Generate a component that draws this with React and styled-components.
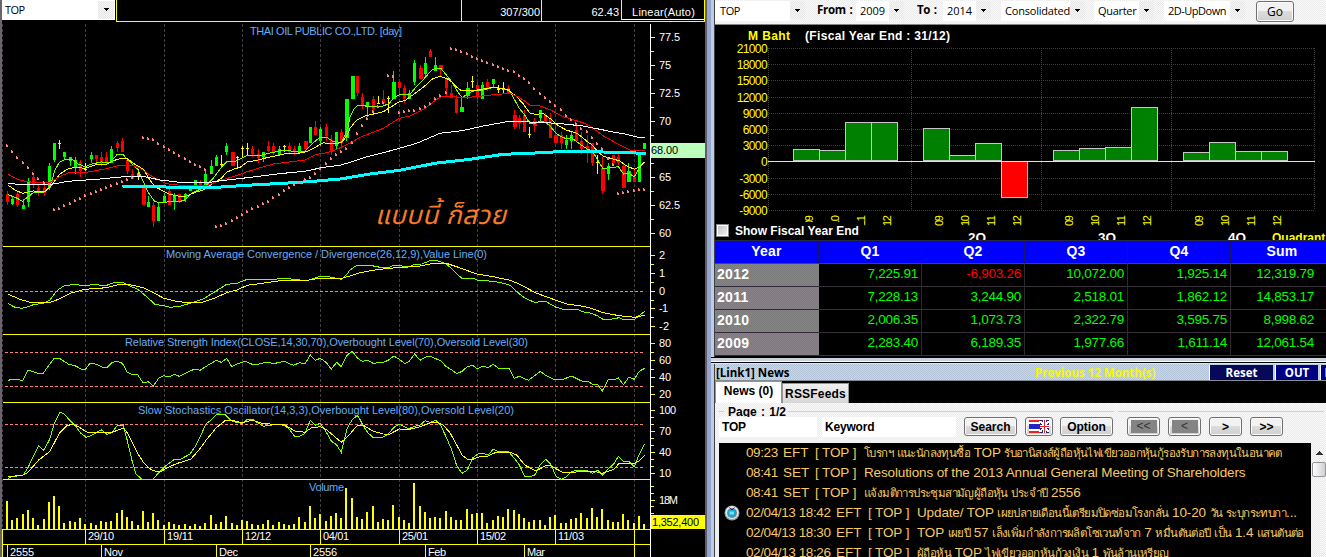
import React from "react";
import styled, { createGlobalStyle, css } from "styled-components";

const GlobalStyle = createGlobalStyle`
  * {
    box-sizing: border-box;
  }
  body {
    margin: 0;
    background: #000;
    overflow: hidden;
    font-family: "Liberation Sans", Arial, sans-serif;
  }
`;

/* ---------- data ---------- */

// kind, high, body top, body bottom, low (y in px)
const candles = [
  ["r", 191, 194, 202, 205], ["g", 197, 199, 204, 205], ["r", 192, 194, 205, 207], ["g", 199, 205, 209, 209],
  ["g", 178, 182, 202, 207], ["r", 173, 177, 185, 188], ["r", 185, 188, 193, 196], ["r", 185, 188, 193, 196],
  ["g", 163, 166, 188, 190], ["g", 143, 143, 160, 162], ["y", 140, 143, 143, 149], ["g", 152, 152, 157, 160],
  ["g", 157, 157, 161, 166], ["g", 157, 160, 167, 174], ["r", 160, 162, 171, 177], ["y", 163, 169, 169, 171],
  ["g", 152, 155, 159, 163], ["r", 155, 155, 159, 162], ["r", 152, 157, 162, 166], ["r", 152, 157, 162, 165],
  ["g", 146, 149, 163, 163], ["r", 141, 143, 148, 152], ["r", 138, 141, 152, 152], ["r", 160, 160, 171, 174],
  ["r", 169, 174, 179, 179], ["y", 169, 175, 175, 180], ["R", 185, 187, 205, 205], ["g", 196, 202, 207, 207],
  ["r", 202, 205, 221, 227], ["g", 202, 207, 221, 221], ["g", 193, 196, 202, 202], ["r", 185, 191, 205, 205],
  ["g", 193, 195, 202, 210], ["r", 194, 194, 202, 203], ["g", 193, 194, 199, 202], ["g", 186, 186, 191, 191],
  ["g", 180, 180, 185, 188], ["r", 180, 182, 186, 188], ["g", 171, 174, 186, 186], ["g", 160, 166, 174, 174],
  ["g", 155, 157, 166, 166], ["y", 155, 164, 164, 166], ["g", 143, 146, 152, 155], ["R", 152, 152, 166, 166],
  ["y", 156, 157, 157, 168], ["y", 146, 148, 148, 157], ["y", 143, 148, 148, 155], ["r", 146, 149, 154, 157],
  ["r", 149, 154, 158, 163], ["g", 152, 152, 157, 162], ["r", 141, 146, 151, 152], ["r", 143, 146, 152, 155],
  ["g", 146, 149, 155, 155], ["y", 145, 146, 146, 152], ["r", 143, 146, 152, 154], ["r", 146, 149, 152, 155],
  ["g", 143, 146, 152, 152], ["R", 141, 141, 149, 149], ["g", 127, 127, 143, 143], ["r", 121, 127, 135, 135],
  ["g", 127, 129, 141, 146], ["r", 124, 127, 136, 141], ["r", 135, 140, 152, 155], ["g", 132, 132, 146, 149],
  ["r", 129, 132, 143, 149], ["G", 99, 99, 138, 141], ["G", 76, 76, 99, 99], ["r", 76, 76, 93, 96],
  ["r", 93, 97, 105, 109], ["g", 102, 102, 107, 117], ["r", 96, 99, 109, 112], ["y", 96, 103, 103, 104],
  ["r", 90, 99, 103, 105], ["y", 96, 98, 98, 113], ["G", 71, 82, 99, 99], ["r", 82, 82, 88, 97],
  ["r", 85, 88, 99, 103], ["g", 90, 93, 99, 99], ["g", 60, 63, 82, 85], ["R", 65, 68, 79, 79],
  ["g", 57, 63, 74, 77], ["r", 49, 51, 57, 57], ["g", 57, 65, 71, 71], ["R", 65, 65, 70, 76],
  ["r", 77, 79, 88, 97], ["r", 85, 93, 98, 98], ["r", 95, 99, 113, 113], ["G", 97, 107, 112, 112],
  ["G", 82, 88, 96, 99], ["y", 76, 81, 81, 88], ["r", 82, 85, 97, 103], ["g", 82, 85, 99, 99],
  ["r", 79, 82, 88, 91], ["g", 79, 79, 84, 87], ["y", 85, 89, 89, 93], ["y", 82, 89, 89, 93],
  ["r", 85, 88, 93, 93], ["R", 110, 115, 127, 129], ["r", 115, 118, 123, 129], ["r", 110, 115, 132, 132],
  ["y", 127, 134, 134, 138], ["R", 118, 121, 126, 132], ["g", 110, 110, 118, 123], ["r", 113, 115, 123, 123],
  ["r", 113, 118, 138, 138], ["R", 123, 135, 143, 143], ["r", 132, 135, 143, 149], ["g", 135, 140, 145, 149],
  ["g", 132, 135, 141, 149], ["r", 124, 130, 141, 141], ["r", 132, 141, 149, 154], ["r", 135, 146, 152, 163],
  ["r", 143, 143, 163, 166], ["y", 155, 162, 162, 174], ["R", 157, 168, 191, 194], ["g", 163, 166, 174, 180],
  ["r", 155, 155, 163, 166], ["r", 154, 157, 163, 165], ["R", 163, 166, 188, 188], ["G", 163, 171, 182, 182],
  ["r", 168, 177, 182, 182], ["g", 154, 154, 182, 182], ["g", 143, 143, 149, 149],
];

const volumes = [
  28, 9, 11, 15, 19, 11, 4, 10, 27, 33, 23, 6, 8, 7, 11, 5, 6, 4, 8, 7, 8, 16, 19, 12, 8, 4, 18, 7, 16, 9, 4, 7, 5, 4,
  5, 3, 5, 3, 6, 14, 5, 7, 13, 6, 4, 9, 8, 5, 4, 5, 9, 4, 7, 5, 4, 5, 12, 7, 23, 11, 15, 8, 13, 16, 11, 41, 31, 12,
  10, 17, 23, 7, 10, 9, 24, 12, 9, 6, 46, 23, 17, 11, 12, 11, 18, 12, 9, 9, 20, 15, 16, 16, 6, 9, 13, 12, 20, 19, 15,
  11, 7, 9, 9, 4, 12, 14, 6, 6, 10, 11, 16, 11, 21, 12, 20, 9, 7, 7, 15, 9, 6, 13, 5,
];

// parabolic SAR runs: first candle index and one y per candle
const sarRuns = [
  [0, [145, 151, 157, 162, 167, 173, 178, 182, 184]],
  [9, [209, 208, 205, 203, 200, 198, 195, 193, 191, 189, 187, 185, 183, 181, 179, 177, 174]],
  [26, [137, 138, 139, 143, 146, 149, 152, 155, 158, 161, 164, 166, 169, 172]],
  [40, [226, 225, 223, 220, 217, 214, 211, 208, 206, 203, 201, 197, 194, 190, 187, 184, 182, 179, 177, 173, 168, 163, 158, 154, 151, 148, 142, 133]],
  [68, [125, 118, 111, 106, 102]],
  [73, [75, 76]],
  [75, [112, 111, 110, 110, 108, 106, 103, 98, 95, 92]],
  [85, [48, 49, 51, 53, 56, 58, 60, 62, 64, 66, 68, 70, 71, 75, 78, 82, 88, 93, 97, 101, 105, 109, 115, 119, 123, 128, 131, 137, 143, 148, 158, 164]],
  [117, [193, 192, 191, 190, 189, 189]],
];

// Line samples are kept on a grid three times finer than the screen.
// `right` restarts at x = 350px, `top` is the y of the samples' origin.
const traces = [
  {
    color: "#7fff00", top: 0,
    left: "25,584 52,595 67,604 84,591 100,578 130,578 150,560 165,510 178,487 193,479 215,477 235,492 255,500 275,492 304,486 330,487 351,464 370,464 383,480 413,508 430,545 445,578 465,605 485,608 508,605 538,605 554,600 575,580 600,568 620,555 640,535 664,502 680,485 705,485 725,475 742,466 775,468 805,460 853,450 900,457 915,453 935,432 960,412 980,412 1000,425 1025,427 1042,390",
    right: "0,352 10,330 22,318 37,315 53,320 100,318 118,310 132,293 148,284 178,285 195,265 210,250 226,232 245,210 257,205 272,205 289,225 305,245 320,270 336,293 355,280 378,270 400,270 430,262 461,268 477,268 493,298 508,325 524,345 540,371 556,370 571,362 590,370 602,380 618,400 633,410 649,416 664,413 680,425 697,437 712,447 727,453 743,480 759,506 775,503 791,502 805,500 821,522 837,520 853,530 868,505 884,485",
  },
  {
    color: "#ffff00", top: 0,
    left: "25,556 45,570 67,580 84,576 100,573 135,574 150,562 178,524 200,508 225,502 255,505 288,494 320,492 351,478 380,474 400,490 430,508 450,540 465,560 490,573 508,583 538,589 560,588 585,577 610,570 640,550 664,535 680,517 700,508 720,502 742,486 775,480 800,473 853,462 900,459 920,455 946,442 970,428 990,432 1025,428 1042,405",
    right: "0,385 20,360 45,348 100,335 148,305 165,302 195,280 220,262 245,238 270,229 289,235 305,245 320,262 336,273 380,270 430,262 470,268 500,290 520,312 540,340 556,343 580,341 602,357 625,377 649,390 680,400 697,412 712,425 727,435 743,455 759,468 791,478 808,482 825,495 853,508 870,500 884,485",
  },
  {
    color: "#ff0000", top: 0,
    left: "25,523 50,537 75,544 115,549 150,548 178,530 205,519 265,516 320,506 351,498 385,495 413,500 440,518 465,535 500,551 550,557 620,557 664,540 700,530 742,515 775,505 820,492 868,486 915,480 946,464 980,458 1010,448 1040,434",
    right: "0,430 30,412 100,385 148,355 180,348 226,325 257,300 275,290 300,289 336,293 380,290 430,284 480,280 508,292 540,315 571,318 602,330 640,350 680,362 712,373 743,395 759,407 800,430 840,450 884,452",
  },
  {
    color: "#ffffff", top: 0,
    left: "25,550 70,555 155,553 205,544 300,537 385,529 435,530 480,540 550,548 620,548 680,540 742,533 850,520 915,514 970,502 1020,496",
    right: "0,487 50,470 100,458 148,445 200,430 270,400 336,392 400,378 477,364 540,366 620,370 700,378 750,388 800,398 830,403 860,411 884,411",
  },
  {
    color: "#00ffff", width: 3, top: 0,
    left: "366,558 460,560 580,563 650,562 740,556 850,550 940,544 1030,536",
    right: "0,532 60,522 148,511 260,489 360,478 460,463 540,460 610,456 680,454 760,456 887,460",
  },
  {
    color: "#7fff00", top: 240,
    left: "25,191 45,202 67,205 84,200 100,194 130,190 150,180 163,162 178,147 193,137 225,133 255,138 275,134 320,136 345,127 370,128 390,138 413,148 440,170 465,193 490,197 510,202 540,199 575,188 610,177 640,158 680,133 711,130 742,118 800,120 853,115 920,122 960,109 980,109 1025,118 1042,101",
    right: "0,90 20,76 60,76 90,82 118,82 132,76 178,80 195,73 215,72 240,62 262,62 289,72 305,86 320,102 336,115 370,115 383,121 430,124 461,130 480,136 500,155 524,174 556,188 571,184 590,186 618,202 640,208 680,208 705,217 725,220 743,228 759,238 780,238 808,233 821,239 853,239 868,226 884,214",
  },
  {
    color: "#ffff00", top: 240,
    left: "25,163 60,178 90,187 150,187 178,177 210,160 255,148 320,143 360,133 390,134 430,143 460,158 490,174 520,182 560,188 605,187 640,176 680,158 711,150 742,136 800,128 850,121 920,121 960,115 1025,115",
    right: "0,108 30,98 80,89 148,82 200,80 240,72 289,70 320,80 380,102 430,110 480,121 510,133 556,158 618,181 650,192 700,199 730,207 759,218 808,227 853,232 884,226",
  },
  {
    color: "#7fff00", top: 240,
    left: "25,421 38,418 68,421 84,391 100,395 118,402 130,400 147,375 163,355 178,355 205,372 225,377 245,388 256,388 271,369 290,373 310,383 320,383 335,368 350,364 367,370 382,397 397,404 413,404 429,428 445,425 460,438 476,415 492,407 508,411 523,403 538,409 570,393 585,387 600,391 625,375 649,361 664,367 680,355 695,380 711,372 735,364 757,373 775,373 800,366 820,371 853,364 880,376 899,368 915,371 931,345 946,361 961,355 978,367 994,387 1010,367 1024,380 1040,347",
    right: "6,333 22,354 37,364 53,361 69,370 100,367 115,361 132,348 148,358 165,371 178,364 194,342 210,361 226,352 240,348 257,356 272,362 289,380 305,390 320,401 336,394 352,380 368,376 383,387 398,378 414,383 430,373 446,385 477,385 493,415 508,409 535,421 556,406 571,394 587,406 612,418 640,418 664,408 697,424 713,424 727,432 743,434 757,453 775,418 797,418 805,413 820,434 837,411 853,418 868,394 884,385",
  },
  {
    color: "#7fff00", top: 240,
    left: "25,716 35,709 68,707 84,683 100,648 116,618 131,631 149,598 163,550 180,516 193,522 210,542 226,558 241,578 258,592 271,588 288,578 304,569 320,583 335,578 351,558 370,555 382,602 397,665 408,702 425,717 460,717 476,698 492,682 523,658 538,660 570,642 585,620 601,590 617,553 633,540 649,524 675,523 695,543 711,548 727,550 742,538 757,538 790,559 830,553 853,556 868,568 884,589 899,589 915,580 931,541 946,556 961,550 978,575 994,603 1010,615 1024,637 1040,570",
    right: "0,550 10,535 24,527 37,552 53,578 69,592 100,591 115,582 132,562 148,553 175,566 194,559 210,555 226,542 240,547 257,541 272,556 289,592 305,630 320,677 336,700 352,690 368,654 383,642 400,640 414,645 430,628 446,635 477,636 493,655 508,675 524,709 540,710 556,704 571,674 587,658 602,672 618,709 633,718 649,711 664,695 680,691 713,693 727,700 743,690 757,706 775,686 791,672 805,649 820,664 837,664 853,680 868,642 884,611",
  },
  {
    color: "#ffff00", top: 240,
    left: "25,710 68,706 84,697 116,660 149,635 178,580 200,557 217,553 235,560 262,577 335,577 370,565 382,578 413,640 429,665 445,683 460,692 480,696 508,680 538,668 572,658 601,625 617,602 649,563 675,542 695,541 727,548 757,541 790,551 853,554 884,573 915,577 935,563 961,560 978,568 1024,607 1042,590",
    right: "0,582 20,558 40,556 70,574 100,582 118,583 148,567 178,568 210,560 240,549 265,548 280,556 300,578 320,615 336,645 352,657 368,658 390,650 414,648 440,636 480,637 500,645 524,675 556,692 571,686 587,677 602,677 618,686 640,698 664,698 700,693 740,696 757,700 791,688 808,670 850,672 868,662 884,646",
  },
];

// x, baseline, width, text
const chartTitles = [
  [250, 35, 152, "THAI OIL PUBLIC CO.,LTD. [day]"],
  [166, 258, 321, "Moving Average Convergence / Divergence(26,12,9),Value Line(0)"],
  [125, 346, 403, "Relative Strength Index(CLOSE,14,30,70),Overbought Level(70),Oversold Level(30)"],
  [138, 414, 376, "Slow Stochastics Oscillator(14,3,3),Overbought Level(80),Oversold Level(20)"],
  [309, 491, 35, "Volume"],
];

// y, width, text
const axisLabels = [
  [37, 21, "77.5"], [65, 12, "75"], [93, 21, "72.5"], [121, 12, "70"], [177, 12, "65"], [205, 21, "62.5"], [233, 12, "60"],
  [255, 6, "2"], [273, 5, "1"], [291, 6, "0"], [308, 9, "-1"], [326, 10, "-2"],
  [343, 12, "80"], [360, 12, "60"], [377, 12, "40"], [394, 12, "20"],
  [410, 17, "100"], [431, 12, "70"], [452, 12, "40"], [473, 12, "10"],
  [500, 19, "18M"],
];
const minorTicks = [
  51, 79, 107, 135, 163, 191, 219, 264, 282, 300, 317, 352, 369, 386, 417, 424, 438, 445, 459, 466, 486, 493, 506, 513,
];

const gridX = [85, 164, 242, 320, 399, 477, 555, 634];
const days = [[85, "29/10"], [164, "19/11"], [242, "12/12"], [320, "04/01"], [399, "25/01"], [477, "15/02"], [555, "11/03"]];
const months = [[7, "2555", 24], [101, "Nov", 19], [216, "Dec", 19], [310, "2556", 24], [425, "Feb", 18], [524, "Mar", 18]];

const quarters = [
  [793, [149, 150, 122, 122]],
  [923, [128, 155, 143, 198]],
  [1053, [150, 148, 147, 107]],
  [1183, [152, 142, 151, 151]],
];

const earnings = [
  ["2012", "7,225.91", "-6,903.26", "10,072.00", "1,925.14", "12,319.79"],
  ["2011", "7,228.13", "3,244.90", "2,518.01", "1,862.12", "14,853.17"],
  ["2010", "2,006.35", "1,073.73", "2,322.79", "3,595.75", "8,998.62"],
  ["2009", "2,283.40", "6,189.35", "1,977.66", "1,611.14", "12,061.54"],
];

const news = [
  { time: "09:23", source: "EFT", title: "โบรกฯ แนะนักลงทุนซื้อ TOP รับอานิสงส์ผู้ถือหุ้นไฟเขียวออกหุ้นกู้รองรับการลงทุนในอนาคต" },
  { time: "08:41", source: "SET", title: "Resolutions of the 2013 Annual General Meeting of Shareholders" },
  { time: "08:41", source: "SET", title: "แจ้งมติการประชุมสามัญผู้ถือหุ้น ประจำปี 2556" },
  { time: "02/04/13 18:42", source: "EFT", title: "Update/ TOP เผยปลายเดือนนี้เตรียมปิดซ่อมโรงกลั่น 10-20 วัน ระบุกระทบกา...", tv: true },
  { time: "02/04/13 18:30", source: "EFT", title: "TOP เผยปี 57 เล็งเพิ่มกำลังการผลิตโซเวนท์จาก 7 หมื่นตันต่อปี เป็น 1.4 แสนตันต่อ" },
  { time: "02/04/13 18:26", source: "EFT", title: "ผู้ถือหุ้น TOP ไฟเขียวออกหุ้นกู้วงเงิน 1 พันล้านเหรียญ" },
];

/* ---------- shared ---------- */

const checker = (a, b) => css`
  background: repeating-conic-gradient(${a} 0 25%, ${b} 0 50%) 0 0 / 2px 2px;
`;

const Screen = styled.main`
  display: flex;
  width: 1326px;
  height: 557px;
  overflow: hidden;
  background: #000;
`;
const ArrowCont = styled.span`
  width: ${(props) => props.$w || 15}px;
  height: ${(props) => props.$h || 18}px;
  display: flex;
  align-items: center;
  justify-content: center;
  flex: none;
  ${checker("#e4e4e4", "#f8f8f8")}
`;
const Arrow = ({ w, h }) => (
  <ArrowCont $w={w} $h={h}>
    <svg width="5" height="3" shapeRendering="crispEdges">
      <path d="M0 0H5V1H4V2H3V3H2V2H1V1H0Z" fill="#000" />
    </svg>
  </ArrowCont>
);

/* ---------- left side: price chart ---------- */

const ChartPanel = styled.section`
  width: 705px;
  flex: none;
  display: flex;
  flex-direction: column;
  border-left: 2px solid #6b636b;
`;
const ChartBar = styled.div`
  display: flex;
  height: 22px;
  align-items: flex-start;
`;
const SymbolBox = styled.div`
  width: 113px;
  height: 20px;
  display: flex;
  align-items: center;
  justify-content: space-between;
  padding: 0 1px 1px 3px;
  background: #fff;
  color: #000;
  font-family: "Open Sans", sans-serif;
  font-size: 11px;
  letter-spacing: -0.6px;
`;
const StatusCells = styled.div`
  flex: 1;
  margin-left: 1px;
  height: 22px;
  display: flex;
  justify-content: flex-end;
  border: solid #ffff00;
  border-width: 0 1px 1px 1px;
`;
const StatusCell = styled.div`
  width: ${(props) => props.$w}px;
  border-left: 1px solid #ffff00;
  padding-top: 5px;
  padding-right: ${(props) => props.$pad}px;
  color: #fff;
  font-size: 11px;
  line-height: 14px;
  letter-spacing: ${(props) => props.$ls || 0}px;
  text-align: right;
  ${(props) =>
    props.$boxed &&
    css`
      height: 20px;
      border-bottom: 1px solid #fff;
    `}
`;
const ChartSvg = styled.svg`
  display: block;
  flex: none;
  font-family: "Liberation Sans", Arial, sans-serif;
  font-size: 11px;
`;

const barX = (i) => Math.round(6 + i * 5.222);

const toPoints = ({ left, right, top }) =>
  [[left, 0], [right, 350]]
    .flatMap(([samples, x0]) =>
      samples.split(" ").map((pair) => {
        const [x, y] = pair.split(",").map(Number);
        return `${(x0 + x / 3).toFixed(1)},${(top + y / 3).toFixed(1)}`;
      })
    )
    .join(" ");

const candleColors = { r: "#ff0000", g: "#00ff00", y: "#ffff00" };

const Candle = ({ i, row }) => {
  const [kind, high, top, bottom, low] = row;
  const x = barX(i);
  const color = candleColors[kind.toLowerCase()];
  const wide = kind === "G" || kind === "R";
  return (
    <g fill={color}>
      <rect x={x + 1} y={high} width="1" height={low - high} />
      <rect x={wide ? x - 0.5 : x} y={top} width={wide ? 4 : 3} height={Math.max(1, bottom - top)} />
    </g>
  );
};

const PriceChart = () => (
  <ChartSvg width="703" height="535" viewBox="2 22 703 535" shapeRendering="crispEdges">
    <g stroke="#463e46" strokeDasharray="3 2">
      {gridX.map((x) => (
        <line key={x} x1={x + 0.5} x2={x + 0.5} y1="24" y2="529" />
      ))}
      <line x1="2.5" x2="2.5" y1="24" y2="529" />
    </g>
    <g fill="#ffff00">
      {[246, 334, 402, 479, 529, 544].map((y) => (
        <rect key={y} x="3" y={y} width="647" height="1" />
      ))}
      <rect x="2" y="529" width="1" height="28" />
      {days.map(([x]) => (
        <rect key={x} x={x} y="529" width="1" height="15" />
      ))}
      {months.map(([x]) => (
        <rect key={x} x={x} y="544" width="1" height="13" />
      ))}
      <rect x="634" y="529" width="1" height="28" />
    </g>
    <g stroke="#ff8080" strokeDasharray="3 2">
      {[291, 352, 386, 424, 467].map((y) => (
        <line key={y} x1="5" x2="645" y1={y + 0.5} y2={y + 0.5} />
      ))}
    </g>
    <g fill="#63adf7">
      {chartTitles.map(([x, y, w, text]) => (
        <text key={text} x={x} y={y} textLength={w}>{text}</text>
      ))}
    </g>
    {candles.map((row, i) => (
      <Candle key={i} i={i} row={row} />
    ))}
    {traces.map((trace, i) => (
      <polyline key={i} points={toPoints(trace)} fill="none" stroke={trace.color} strokeWidth={trace.width || 1} />
    ))}
    <g fill="#ff8080">
      {sarRuns.map(([start, ys]) =>
        ys.map((y, k) => (
          <path key={start + k} d={`M${barX(start + k)} ${y - 1}h1v1h1v2h-2z`} />
        ))
      )}
    </g>
    <g fill="#ffff00">
      {volumes.map((h, i) => (
        <rect key={i} x={barX(i)} y={529 - h} width="2" height={h} />
      ))}
    </g>
    <text x="375" y="224" textLength="131" fill="#f77b29" fontSize="26" fontStyle="italic" fontFamily='"Noto Sans Thai", "Liberation Sans", sans-serif'>
      แบบนี้ ก็สวย
    </text>
    <rect x="650" y="24" width="1" height="533" fill="#fff" />
    <g fill="#ffff00">
      {axisLabels.map(([y]) => (
        <rect key={y} x="651" y={y} width="4" height="1" />
      ))}
      {minorTicks.map((y) => (
        <rect key={y} x="651" y={y} width="3" height="1" />
      ))}
    </g>
    <g fill="#fff">
      {axisLabels.map(([y, w, text]) => (
        <text key={y} x="659" y={y + 4} textLength={w}>{text}</text>
      ))}
      {days.map(([x, text]) => (
        <text key={x} x={x + 3} y="540" textLength="26">{text}</text>
      ))}
      {months.map(([x, text, w]) => (
        <text key={x} x={x + 3} y="556" textLength={w}>{text}</text>
      ))}
    </g>
    <rect x="651" y="143" width="54" height="15" fill="#bdffbd" />
    <text x="651" y="154" textLength="27" fill="#000">68.00</text>
    <rect x="651" y="515" width="54" height="14" fill="#ffff00" />
    <text x="652" y="526" textLength="47" fill="#000">1,352,400</text>
  </ChartSvg>
);

/* ---------- splitter ---------- */

const Splitter = styled.div`
  width: 10px;
  flex: none;
  border-left: 2px solid #635a6b;
  border-right: 1px solid #42424a;
  background: linear-gradient(to right, #94a5ce 0 4px, #bdcee0 4px 100%);
`;

/* ---------- right side: earnings ---------- */

const RightPanel = styled.section`
  width: 611px;
  flex: none;
  display: flex;
  flex-direction: column;
`;
const Toolbar = styled.div`
  height: 25px;
  flex: none;
  display: flex;
  align-items: flex-start;
  padding-top: 1px;
  border-bottom: 1px solid #848484;
  ${checker("#ececec", "#fafafa")}
`;
const Field = styled.div`
  width: ${(props) => props.$w}px;
  height: 20px;
  margin-left: ${(props) => props.$ml || 0}px;
  padding-left: ${(props) => props.$pl}px;
  background: #fff;
  color: #000;
  font-family: "Open Sans", sans-serif;
  font-size: 11px;
  line-height: 20px;
  letter-spacing: ${(props) => props.$ls || 0}px;
  white-space: nowrap;
`;
const FieldLabel = styled.div`
  width: ${(props) => props.$w}px;
  margin-left: ${(props) => props.$ml}px;
  color: #000;
  font-family: "Open Sans", sans-serif;
  font-size: 11.5px;
  font-weight: 700;
  line-height: 18px;
  letter-spacing: -0.3px;
  word-spacing: 1px;
  white-space: nowrap;
`;
const XpButton = styled.button`
  width: ${(props) => props.$w}px;
  height: ${(props) => props.$h || 19}px;
  margin-left: ${(props) => props.$ml || 0}px;
  flex: none;
  padding: 0;
  display: flex;
  align-items: center;
  justify-content: center;
  border: 1px solid #707070;
  border-radius: 3px;
  box-shadow: inset 0 0 0 1px #fafafa;
  background: linear-gradient(#f2f2f2 0 48%, #dcdcdc 50%, #cfcfcf);
  color: #000;
  font-family: ${(props) => props.$font || '"Liberation Sans", Arial, sans-serif'};
  font-size: 12px;
  font-weight: ${(props) => (props.$plain ? 400 : 700)};
`;
const BarArea = styled.div`
  position: relative;
  height: 215px;
  flex: none;
`;
const BarSvg = styled.svg`
  display: block;
  font-family: "Liberation Sans", Arial, sans-serif;
`;
const FiscalToggle = styled.label`
  position: absolute;
  left: 0;
  top: 197px;
  width: 149px;
  height: 17px;
  display: flex;
  align-items: center;
  background: #000;
  color: #fff;
  font-size: 12px;
  font-weight: 700;
  white-space: nowrap;
`;
const CheckBox = styled.span`
  width: 13px;
  height: 13px;
  margin: 0 6px 0 1px;
  border: 1px solid #848484;
  box-shadow: inset 0 0 0 1px #fff;
  background: linear-gradient(135deg, #bdbdc6, #f4f4f4);
`;

const EarningsChart = () => (
  <BarArea>
    <BarSvg width="611" height="215" viewBox="715 25 611 215" shapeRendering="crispEdges">
      <text x="748" y="40" textLength="42" fill="#ffff00" fontSize="12" fontWeight="700">M Baht</text>
      <text x="805" y="40" textLength="145" fill="#fff" fontSize="12" fontWeight="700">(Fiscal Year End : 31/12)</text>
      <g stroke="#3e3e3e" strokeDasharray="1 1">
        {[48, 64, 80, 97, 113, 129, 145, 178, 194, 210].map((y) => (
          <line key={y} x1="769" x2="1314" y1={y + 0.5} y2={y + 0.5} />
        ))}
        {[768, 911, 1041, 1171, 1314].map((x) => (
          <line key={x} x1={x + 0.5} x2={x + 0.5} y1="48" y2="210" />
        ))}
      </g>
      <g fill="#ffff00" fontSize="12" textAnchor="end">
        {[21000, 18000, 15000, 12000, 9000, 6000, 3000, 0, -3000, -6000, -9000].map((v, i) => (
          <text key={v} x="767" y={53 + Math.round(i * 16.2)} letterSpacing="-0.6">{v}</text>
        ))}
      </g>
      {quarters.map(([x0, ys]) =>
        ys.map((y, i) => (
          <rect
            key={x0 + i}
            x={x0 + i * 26 + 0.5}
            y={y > 161 ? 161.5 : y + 0.5}
            width="26"
            height={y > 161 ? y - 162 : 160 - y}
            fill={y > 161 ? "#ff0000" : "#008000"}
            stroke="#c6c6c6"
          />
        ))
      )}
      <rect x="768" y="161" width="547" height="1" fill="#ffff00" />
      <g fill="#ffff00" fontSize="11">
        {quarters.map(([x0]) =>
          ["09", "10", "11", "12"].map((t, i) => (
            <text key={x0 + t} textLength="11" transform={`translate(${x0 + 20 + i * 26} 226) rotate(-90)`}>{t}</text>
          ))
        )}
      </g>
      <g fontSize="13.5" fontWeight="700" fill="#fff">
        <text x="968" y="242">2Q</text>
        <text x="1098" y="242">3Q</text>
        <text x="1228" y="242">4Q</text>
        <text x="1272" y="242" fill="#ffff00" fontSize="12">Quadrant</text>
      </g>
    </BarSvg>
    <FiscalToggle>
      <CheckBox />
      Show Fiscal Year End
    </FiscalToggle>
  </BarArea>
);

const Grid = styled.div`
  display: grid;
  grid-template-columns: 104px repeat(5, 103px);
  grid-template-rows: 24px repeat(4, 23px);
  width: 611px;
  height: 117px;
  flex: none;
  overflow: hidden;
`;
const HeadCell = styled.div`
  padding-top: 1px;
  border-top: 1px solid #2a2a3a;
  border-right: 1px solid #181860;
  border-bottom: 1px solid #4a424a;
  background: #0000ff;
  color: #fff;
  font-size: 14px;
  font-weight: 700;
  line-height: 19px;
  letter-spacing: 0.2px;
  text-align: center;
`;
const YearCell = styled.div`
  padding-left: 2px;
  border-bottom: 1px solid #31293a;
  color: #fff;
  font-size: 14px;
  font-weight: 700;
  line-height: 21px;
  letter-spacing: 0.3px;
  ${checker("#7a7a7a", "#8a848a")}
`;
const ValueCell = styled.div`
  padding-right: ${(props) => (props.$last ? 19 : 3)}px;
  border-right: 1px solid #312931;
  border-bottom: 1px solid #393139;
  color: ${(props) => (props.$negative ? "#ff0000" : "#00ff00")};
  font-size: 13.5px;
  line-height: 20px;
  letter-spacing: -0.25px;
  text-align: right;
`;

/* ---------- right side: news ---------- */

const Gap = styled.div`
  height: 7px;
  flex: none;
  margin-left: -4px;
  background: linear-gradient(#000 0 1px, #c6d2de 1px 4px, #fff 4px 5px, #000 5px 6px, #dce6f0 6px);
`;
const TitleBar = styled.div`
  height: 17px;
  flex: none;
  display: flex;
  align-items: center;
  overflow: hidden;
  border-bottom: 1px solid #848c94;
  ${checker("#b4c4d8", "#ccd6de")}
  color: #000;
  font-family: "Open Sans", sans-serif;
  font-size: 11.5px;
  font-weight: 700;
  white-space: nowrap;
`;
const WindowTitle = styled.span`
  width: 320px;
  flex: none;
  padding-left: 1px;
`;
const Period = styled.span`
  width: 174px;
  flex: none;
  color: #f7f700;
`;
const NavyButton = styled.span`
  width: ${(props) => props.$w}px;
  height: 15px;
  flex: none;
  margin-right: 2px;
  border-left: 1px solid #fff;
  background: ${(props) => props.$bg || "#000084"};
  color: #fff;
  line-height: 15px;
  text-align: center;
`;
const Tabs = styled.div`
  height: 22px;
  flex: none;
  display: flex;
  align-items: flex-end;
  background: #000;
`;
const Tab = styled.div`
  width: ${(props) => props.$w}px;
  height: ${(props) => (props.$active ? 22 : 20)}px;
  border: 1px solid #949494;
  border-bottom: 0;
  background: ${(props) => (props.$active ? "#fff" : "linear-gradient(#f0f0f0, #d6d6d6)")};
  color: #000;
  font-size: 12px;
  font-weight: 700;
  line-height: ${(props) => (props.$active ? 19 : 20)}px;
  letter-spacing: ${(props) => props.$ls || 0}px;
  text-align: center;
`;
const SearchArea = styled.div`
  height: 40px;
  flex: none;
  padding: 1px 0 0 4px;
  ${checker("#ebebeb", "#f9f9f9")}
`;
const PageRow = styled.div`
  display: flex;
  height: 13px;
  align-items: flex-start;
  overflow: hidden;
`;
const PageText = styled.span`
  flex: none;
  color: #000;
  font-size: 12px;
  font-weight: 700;
  line-height: 16px;
  word-spacing: 1px;
`;
const Rule = styled.i`
  width: ${(props) => props.$w}px;
  flex: none;
  margin: 7px ${(props) => props.$mr || 0}px 0 ${(props) => props.$ml || 0}px;
  border-top: 1px solid #c6d2e4;
`;
const SearchRow = styled.div`
  display: flex;
  align-items: flex-start;
  height: 20px;
`;
const Input = styled.div`
  width: ${(props) => props.$w}px;
  height: 20px;
  margin-right: ${(props) => props.$mr}px;
  padding-left: 3px;
  background: #fff;
  color: #000;
  font-size: 12px;
  font-weight: 700;
  line-height: 20px;
  letter-spacing: -0.2px;
`;
const Dimmed = styled.span`
  width: 26px;
  height: 13px;
  background: #848484;
  color: #333;
  line-height: 13px;
`;
const NewsBody = styled.div`
  flex: 1;
  min-height: 0;
  display: flex;
  padding-left: 4px;
  background: #f0f0f0;
`;
const NewsList = styled.div`
  width: 592px;
  flex: none;
  overflow: hidden;
  background: #000;
`;
const NewsRow = styled.div`
  height: 20px;
  display: flex;
  align-items: center;
  color: #f7ca63;
  font-size: 13.5px;
  line-height: 20px;
  white-space: nowrap;
`;
const Marker = styled.span`
  width: 27px;
  height: 16px;
  padding-left: 5px;
  flex: none;
`;
const Time = styled.span`
  width: ${(props) => (props.$long ? 90 : 37)}px;
  flex: none;
  letter-spacing: -0.4px;
`;
const Source = styled.span`
  width: 32px;
  flex: none;
`;
const Ticker = styled.span`
  width: 49px;
  flex: none;
  letter-spacing: -0.1px;
`;
const Headline = styled.span`
  letter-spacing: -0.13px;
`;
const Thai = styled.span`
  font-size: 11.5px;
  letter-spacing: -0.6px;
`;
const Scroll = styled.div`
  flex: 1;
  display: flex;
  flex-direction: column;
  padding: 1px 0 0 1px;
  ${checker("#e9e9e9", "#fafafa")}
`;
const ScrollUp = styled.div`
  height: 18px;
  display: flex;
  align-items: center;
  justify-content: center;
`;
const Thumb = styled.div`
  height: 15px;
  border: 1px solid #949494;
  border-radius: 2px;
  background: linear-gradient(to right, #fff, #cfcfd6);
`;

const Flag = () => (
  <svg width="20" height="13" shapeRendering="crispEdges">
    <rect width="11" height="13" fill="#fff" />
    <rect width="11" height="2" fill="#f02020" />
    <rect y="4" width="11" height="5" fill="#2121c6" />
    <rect y="11" width="11" height="2" fill="#f02020" />
    <rect x="11" width="9" height="13" fill="#21296b" />
    <path d="M11 1L20 12M20 1L11 12" stroke="#fff" strokeWidth="2" />
    <path d="M11 6.5H20M15.5 0V13" stroke="#fff" strokeWidth="3" />
    <path d="M11 6.5H20M15.5 0V13" stroke="#e02030" strokeWidth="1" />
  </svg>
);

const TvIcon = () => (
  <svg width="16" height="16" viewBox="0 0 16 16">
    <circle cx="8" cy="8" r="7.5" fill="#a0a0a0" />
    <circle cx="8" cy="7.5" r="6.5" fill="#e7e7ef" />
    <circle cx="8" cy="8" r="5" fill="#73848c" />
    <path d="M5.5 2.5L8 5L10.5 2.5" stroke="#333" fill="none" />
    <rect x="4" y="5" width="8" height="6.5" rx="1" fill="#18a5d6" />
    <rect x="5.5" y="6.5" width="4.5" height="3" fill="#6be7ff" />
  </svg>
);

// Thai runs are set smaller than the Latin text around them
const splitThai = (title) =>
  title.split(/([\u0E00-\u0E7F]+)/).map((part, i) => (i % 2 ? <Thai key={i}>{part}</Thai> : part));

const NewsPanel = () => (
  <>
    <TitleBar>
      <WindowTitle>[Link1] News</WindowTitle>
      <Period>Previous 12 Month(s)</Period>
      <NavyButton $w={64} $bg="#08085a">Reset</NavyButton>
      <NavyButton $w={43}>OUT</NavyButton>
      <NavyButton $w={12}>I</NavyButton>
    </TitleBar>
    <Tabs>
      <Tab $w={67} $active>News (0)</Tab>
      <Tab $w={67} $ls={0.2}>RSSFeeds</Tab>
    </Tabs>
    <SearchArea>
      <PageRow>
        <Rule $w={5} $mr={4} />
        <PageText>Page : 1/2</PageText>
        <Rule $w={326} $ml={2} $mr={4} />
        <Rule $w={206} />
      </PageRow>
      <SearchRow>
        <Input $w={98} $mr={5}>TOP</Input>
        <Input $w={134} $mr={8}>Keyword</Input>
        <XpButton $w={53}>Search</XpButton>
        <XpButton $w={28} $ml={8}><Flag /></XpButton>
        <XpButton $w={53} $ml={7}>Option</XpButton>
        <XpButton $w={33} $ml={14} $plain><Dimmed>&lt;&lt;</Dimmed></XpButton>
        <XpButton $w={33} $ml={8} $plain><Dimmed>&lt;</Dimmed></XpButton>
        <XpButton $w={33} $ml={8}>&gt;</XpButton>
        <XpButton $w={33} $ml={8}>&gt;&gt;</XpButton>
      </SearchRow>
    </SearchArea>
    <NewsBody>
      <NewsList>
        {news.map((item) => (
          <NewsRow key={item.title}>
            <Marker>{item.tv && <TvIcon />}</Marker>
            <Time $long={item.time.length > 5}>{item.time}</Time>
            <Source>{item.source}</Source>
            <Ticker>[ TOP ]</Ticker>
            <Headline>{splitThai(item.title)}</Headline>
          </NewsRow>
        ))}
      </NewsList>
      <Scroll>
        <ScrollUp>
          <svg width="7" height="4" shapeRendering="crispEdges">
            <path d="M3 0H4V1H5V2H6V3H7V4H0V3H1V2H2V1H3Z" fill="#333" />
          </svg>
        </ScrollUp>
        <Thumb />
      </Scroll>
    </NewsBody>
  </>
);

export default () => (
  <>
    <GlobalStyle />
    <Screen>
      <ChartPanel>
        <ChartBar>
          <SymbolBox>
            TOP
            <Arrow w={16} h={18} />
          </SymbolBox>
          <StatusCells>
            <StatusCell $w={80} $pad={1}>307/300</StatusCell>
            <StatusCell $w={80} $pad={2}>62.43</StatusCell>
            <StatusCell $w={83} $pad={9} $ls={0.2} $boxed>Linear(Auto)</StatusCell>
          </StatusCells>
        </ChartBar>
        <PriceChart />
      </ChartPanel>
      <Splitter />
      <RightPanel>
        <Toolbar>
          <Field $w={75} $pl={5} $ls={-0.4}>TOP</Field>
          <Arrow />
          <FieldLabel $ml={12} $w={39}>From :</FieldLabel>
          <Field $w={33} $pl={4}>2009</Field>
          <Arrow />
          <FieldLabel $ml={13} $w={26}>To :</FieldLabel>
          <Field $w={33} $pl={4}>2014</Field>
          <Arrow />
          <Field $ml={10} $w={69} $pl={4} $ls={-0.2}>Consolidated</Field>
          <Arrow />
          <Field $ml={9} $w={45} $pl={4} $ls={-0.3}>Quarter</Field>
          <Arrow />
          <Field $ml={10} $w={66} $pl={4} $ls={-0.5}>2D-UpDown</Field>
          <Arrow />
          <XpButton $ml={11} $w={38} $h={21} $plain $font='"Open Sans", sans-serif'>Go</XpButton>
        </Toolbar>
        <EarningsChart />
        <Grid>
          {["Year", "Q1", "Q2", "Q3", "Q4", "Sum"].map((name) => (
            <HeadCell key={name}>{name}</HeadCell>
          ))}
          {earnings.map(([year, ...values]) => (
            <React.Fragment key={year}>
              <YearCell>{year}</YearCell>
              {values.map((value, i) => (
                <ValueCell key={i} $negative={value[0] === "-"} $last={i === 4}>
                  {value}
                </ValueCell>
              ))}
            </React.Fragment>
          ))}
        </Grid>
        <Gap />
        <NewsPanel />
      </RightPanel>
    </Screen>
  </>
);
